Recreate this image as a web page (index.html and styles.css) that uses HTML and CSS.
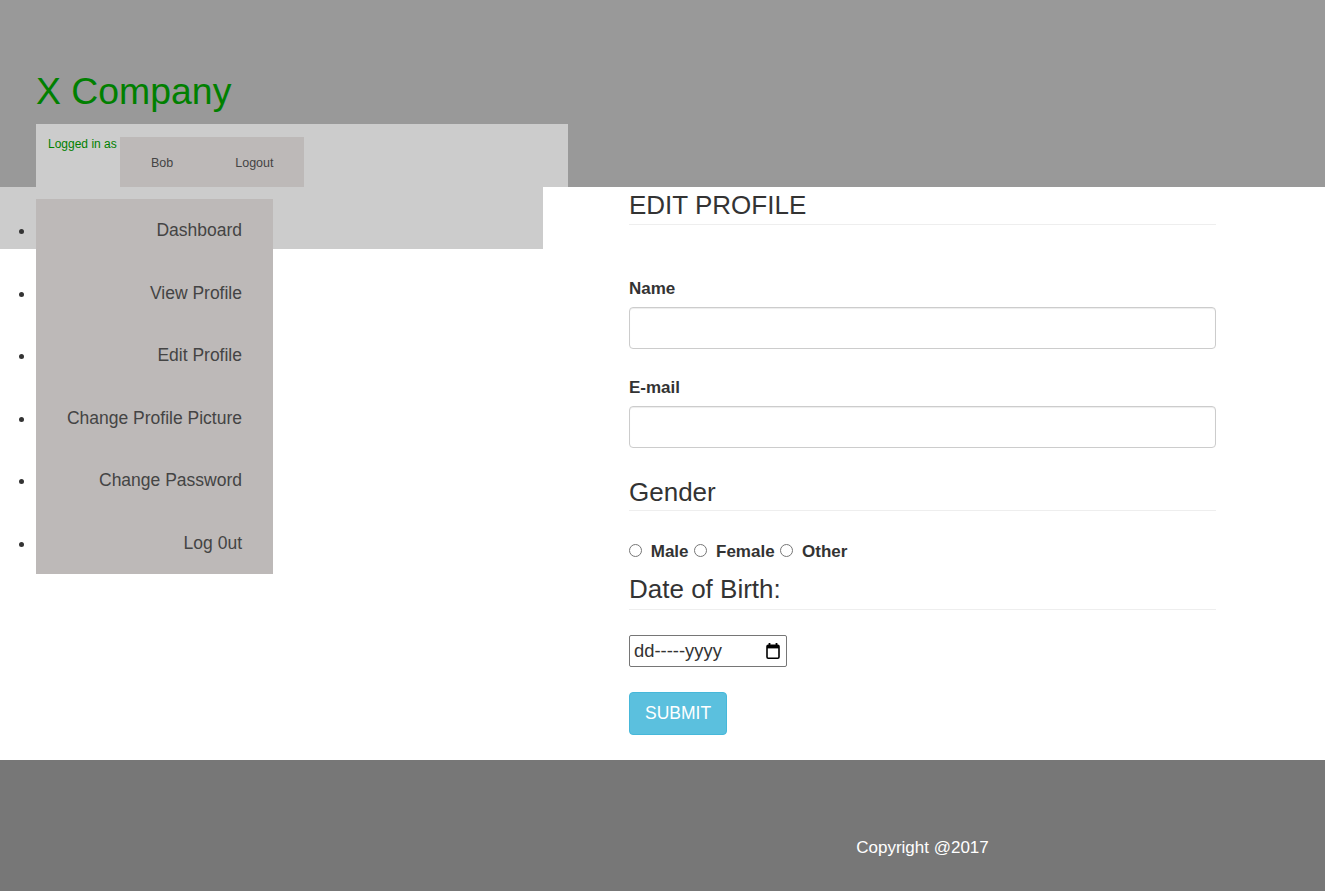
FILE: index.html
```html
<!DOCTYPE html>
<html lang="en">
<head>
<meta charset="utf-8">
<title>X Company - Edit Profile</title>
<link rel="stylesheet" href="styles.css">
</head>
<body>
<header class="top">
  <h1 class="brand">X Company</h1>
  <div class="userbar">
    <span class="logged">Logged in as</span>
    <ul class="usermenu">
      <li>Bob</li>
      <li>Logout</li>
    </ul>
  </div>
</header>

<main class="main">
  <aside class="side">
    <div class="band">
      <ul class="nav">
        <li><span class="nav-link">Dashboard</span></li>
        <li><span class="nav-link">View Profile</span></li>
        <li><span class="nav-link">Edit Profile</span></li>
        <li><span class="nav-link">Change Profile Picture</span></li>
        <li><span class="nav-link">Change Password</span></li>
        <li><span class="nav-link">Log 0ut</span></li>
      </ul>
    </div>
  </aside>

  <form class="form">
    <h2 class="heading heading-first">EDIT PROFILE</h2>

    <div class="group group-first">
      <label class="label" for="name">Name</label>
      <input class="field" id="name" type="text">
    </div>

    <div class="group">
      <label class="label" for="email">E-mail</label>
      <input class="field" id="email" type="text">
    </div>

    <h2 class="heading heading-gender">Gender</h2>

    <div class="radios">
      <input class="radio" type="radio" name="g" id="m"> <label class="rlabel" for="m">Male</label>
      <input class="radio" type="radio" name="g" id="f"> <label class="rlabel" for="f">Female</label>
      <input class="radio" type="radio" name="g" id="o"> <label class="rlabel" for="o">Other</label>
    </div>

    <h2 class="heading heading-dob">Date of Birth:</h2>

    <div class="date">
      <span class="date-text">dd-----yyyy</span>
      <svg class="cal" width="14" height="16" viewBox="0 0 14 16" aria-hidden="true">
        <rect x="2.6" y="0" width="1.8" height="3.2" fill="#000"/>
        <rect x="9.6" y="0" width="1.8" height="3.2" fill="#000"/>
        <rect x="1" y="2.4" width="12" height="12.8" rx="1.2" fill="none" stroke="#000" stroke-width="1.6"/>
        <rect x="1" y="2.4" width="12" height="3" fill="#000"/>
      </svg>
    </div>

    <button class="submit" type="button">SUBMIT</button>
  </form>
</main>

<footer class="footer">Copyright @2017</footer>
</body>
</html>
```

FILE: styles.css
```css
* {
  box-sizing: border-box;
}

body {
  margin: 0;
  font-family: "Liberation Sans", Arial, Helvetica, sans-serif;
  color: #333;
  background: #fff;
}

/* ---------- header ---------- */
.top {
  background: #999;
  height: 187px;
  padding: 70px 0 0 36px;
}

.brand {
  margin: 0 0 12px;
  font-size: 37.4px;
  line-height: 42px;
  font-weight: normal;
  color: #008000;
}

.userbar {
  display: flex;
  align-items: flex-start;
  width: 532px;
  height: 63px;
  padding: 13px 0 0 12px;
  background: #ccc;
}

.logged {
  flex: 0 0 72px;
  font-size: 12px;
  line-height: 15px;
  color: #008000;
  white-space: nowrap;
}

.usermenu {
  display: flex;
  margin: 0;
  padding: 0;
  list-style: none;
  height: 50px;
  background: #bdb9b8;
}

.usermenu li {
  padding: 0 31px;
  font-size: 12.5px;
  line-height: 52px;
  color: #444;
}

/* ---------- main ---------- */
.main {
  display: flex;
  align-items: flex-start;
  padding-bottom: 25px;
}

.side {
  flex: 0 0 543px;
}

.band {
  height: 62px;
  padding-top: 12px;
  background: #ccc;
}

.nav {
  margin: 0;
  padding: 0 0 0 36px;
  list-style: disc;
  color: #333;
  position: relative;
  z-index: 1;
}

.nav li {
  width: 237px;
  height: 62.5px;
  padding-right: 31px;
  background: #bdb9b8;
  text-align: right;
  font-size: 17.5px;
  line-height: 62.5px;
}

.nav-link {
  color: #444;
}

/* ---------- form ---------- */
.form {
  flex: 0 0 587px;
  margin-left: 86px;
}

.heading {
  margin: 0;
  padding-bottom: 4px;
  border-bottom: 1px solid #eee;
  font-size: 26px;
  line-height: 28.6px;
  font-weight: normal;
  color: #333;
}

.heading-first {
  margin-top: 4px;
}

.group {
  margin-top: 29px;
}

.group-first {
  margin-top: 54px;
}

.label {
  display: block;
  margin-bottom: 8px;
  font-size: 17px;
  line-height: 20px;
  font-weight: bold;
}

.field {
  display: block;
  width: 100%;
  height: 42px;
  margin: 0;
  padding: 6px 12px;
  border: 1px solid #ccc;
  border-radius: 4px;
  background: #fff;
  box-shadow: inset 0 1px 1px rgba(0, 0, 0, 0.075);
  font: inherit;
}

.heading-gender {
  margin-top: 30px;
}

.radios {
  margin-top: 29px;
  font-size: 17px;
  line-height: 24px;
}

.radio {
  width: 13px;
  height: 13px;
  margin: 3px 4px 0 0;
}

.rlabel {
  font-weight: bold;
  margin-right: 1px;
}

.heading-dob {
  margin-top: 11px;
  padding-bottom: 5px;
}

.date {
  display: flex;
  align-items: center;
  justify-content: space-between;
  width: 158px;
  height: 32px;
  margin-top: 25px;
  padding: 0 6px 0 4px;
  border: 1px solid #767676;
  border-radius: 2px;
  background: #fff;
}

.date-text {
  font-size: 18.4px;
  line-height: 20px;
  color: #333;
}

.cal {
  display: block;
}

.submit {
  display: block;
  height: 43px;
  margin-top: 25px;
  padding: 0 15px;
  border: 1px solid #46b8da;
  border-radius: 4px;
  background: #5bc0de;
  color: #fff;
  font-family: inherit;
  font-size: 17.5px;
  line-height: 41px;
}

/* ---------- footer ---------- */
.footer {
  height: 131px;
  padding: 78px 0 0 520px;
  background: #777;
  color: #fff;
  text-align: center;
  font-size: 17px;
  line-height: 20px;
}
```
